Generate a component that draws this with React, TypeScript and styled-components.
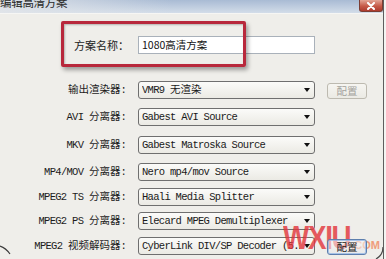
import React from "react";
import styled, { createGlobalStyle } from "styled-components";

const Global = createGlobalStyle`
  html, body { margin: 0; padding: 0; background: #f4f4f2; }
  body { width: 386px; height: 259px; overflow: hidden; }
  #root { width: 386px; height: 259px; }
`;

const Frame = styled.div`
  position: relative;
  width: 383px;
  height: 259px;
  border-right: 1px solid #5e5e5e;
  background: #efeeea;
  display: flex;
  flex-direction: column;
  overflow: hidden;
`;

const TitleBar = styled.div`
  height: 13px;
  flex: none;
  display: flex;
  justify-content: space-between;
  align-items: flex-start;
  background:
    linear-gradient(to right, rgba(226, 229, 233, 0.9), rgba(226, 229, 233, 0) 45%),
    linear-gradient(to bottom, #a9bbd4, #d3dde9);
  border-bottom: 1px solid #f6f6f4;
`;

const Title = styled.span`
  font-family: "Noto Sans CJK SC", sans-serif;
  font-size: 11.5px;
  line-height: 12px;
  margin-top: -4px;
  color: #2a2a2a;
  letter-spacing: -0.3px;
`;

const CloseButton = styled.div`
  width: 24px;
  height: 12px;
  box-sizing: border-box;
  border: 1px solid #7b3d33;
  border-top: none;
  border-radius: 0 0 3px 3px;
  background: linear-gradient(to bottom, #e3a595, #c65a48 55%, #ad3a2e);
  display: flex;
  align-items: center;
  justify-content: center;
`;

const Body = styled.div`
  flex: 1;
  padding-top: 22px;
  display: flex;
  flex-direction: column;
`;

const Row = styled.div<{ $gap: number }>`
  display: grid;
  grid-template-columns: 126px 177px 40px;
  column-gap: 12px;
  height: 18px;
  margin-top: ${(p) => p.$gap}px;
  align-items: center;
`;

const Label = styled.span`
  justify-self: end;
  font-family: "Liberation Mono", "Noto Sans CJK SC", monospace;
  font-size: 10.5px;
  letter-spacing: -0.7px;
  line-height: 18px;
  color: #1c1c1c;
  white-space: pre;
`;

const Han = styled.span`
  font-family: "Noto Sans CJK SC", sans-serif;
  font-size: 10.5px;
  letter-spacing: 0;
`;

const NameLabel = styled.span`
  justify-self: end;
  margin-right: -3px;
  font-family: "Noto Sans CJK SC", sans-serif;
  font-size: 11px;
  line-height: 18px;
  color: #222;
`;

const Input = styled.div`
  box-sizing: border-box;
  height: 18px;
  border: 1px solid #a9b1ba;
  background: #fff;
  padding-left: 3px;
  font-family: "Noto Sans CJK SC", sans-serif;
  font-size: 10.5px;
  line-height: 16px;
  color: #111;
`;

const Select = styled.div`
  box-sizing: border-box;
  height: 18px;
  border: 1px solid #6f6f6f;
  border-radius: 3px;
  background: linear-gradient(to bottom, #fbfbf9, #ebeae4);
  display: flex;
  align-items: center;
  padding: 0 4px 0 3px;
`;

const SelectText = styled.span`
  flex: 1;
  overflow: hidden;
  white-space: pre;
  font-family: "Liberation Mono", "Noto Sans CJK SC", monospace;
  font-size: 10.5px;
  letter-spacing: -0.7px;
  line-height: 16px;
  color: #1a1a1a;
`;

const Arrow = styled.span`
  flex: none;
  width: 0;
  height: 0;
  margin-left: 4px;
  border-left: 3.5px solid transparent;
  border-right: 3.5px solid transparent;
  border-top: 4px solid #111;
`;

const ConfigButton = styled.div<{ $enabled?: boolean }>`
  position: relative;
  z-index: 2;
  box-sizing: border-box;
  height: 16px;
  align-self: end;
  border-radius: 3px;
  border: 1px solid ${(p) => (p.$enabled ? "#5d7fae" : "#bdbab0")};
  background: ${(p) =>
    p.$enabled
      ? "linear-gradient(to bottom, rgba(251,251,250,0.55), rgba(226,228,232,0.55))"
      : "linear-gradient(to bottom, #f6f5f1, #ebeae4)"};
  box-shadow: ${(p) => (p.$enabled ? "inset 0 0 0 1px rgba(150,185,230,0.8)" : "none")};
  display: flex;
  align-items: center;
  justify-content: center;
  font-family: "Noto Sans CJK SC", sans-serif;
  font-size: 10.5px;
  line-height: 14px;
  color: ${(p) => (p.$enabled ? "#1a1a1a" : "#a3a29c")};
`;

const Highlight = styled.div`
  position: absolute;
  left: 61px;
  top: 21px;
  width: 185px;
  height: 46px;
  box-sizing: border-box;
  border: 3px solid #b8283c;
  border-radius: 2px;
  box-shadow: 2px 3px 4px rgba(0, 0, 0, 0.35), inset 1px 1px 2px rgba(0, 0, 0, 0.25);
  pointer-events: none;
`;

const Watermark = styled.div`
  position: absolute;
  z-index: 1;
  left: 283px;
  top: 219px;
  display: flex;
  align-items: baseline;
  pointer-events: none;
  opacity: 0.8;
`;

const WmBig = styled.span`
  display: inline-block;
  font-family: "Liberation Sans", sans-serif;
  font-weight: bold;
  font-size: 33px;
  letter-spacing: -1.5px;
  color: #e2353b;
  transform: scaleX(0.84);
  transform-origin: left center;
  margin-right: -12px;
`;

const WmSmall = styled.span`
  font-family: "Liberation Sans", sans-serif;
  font-weight: bold;
  font-size: 11px;
  color: #f0895f;
`;

const Corner = styled.svg<{ $side: "left" | "right" }>`
  position: absolute;
  bottom: 0;
  ${(p) => (p.$side === "left" ? "left: 0;" : "right: -1px;")}
  pointer-events: none;
`;

const mixed = (s: string) =>
  s.split(/([\u3000-\u9fff\uff00-\uffef]+)/).map((part, i) =>
    /[\u3000-\u9fff\uff00-\uffef]/.test(part) ? <Han key={i}>{part}</Han> : part
  );

type RowData = { label: string; value: string; gap: number; button?: "off" | "on" };

const rows: RowData[] = [
  { label: "输出渲染器:", value: "VMR9 无渲染", gap: 26, button: "off" },
  { label: "AVI 分离器:", value: "Gabest AVI Source", gap: 9 },
  { label: "MKV 分离器:", value: "Gabest Matroska Source", gap: 10 },
  { label: "MP4/MOV 分离器:", value: "Nero mp4/mov Source", gap: 9 },
  { label: "MPEG2 TS 分离器:", value: "Haali Media Splitter", gap: 7 },
  { label: "MPEG2 PS 分离器:", value: "Elecard MPEG Demultiplexer", gap: 6 },
  { label: "MPEG2 视频解码器:", value: "CyberLink DIV/SP Decoder (5.2)", gap: 7, button: "on" },
];

export default function App() {
  return (
    <>
      <Global />
      <Frame>
        <TitleBar>
          <Title>编辑高清方案</Title>
          <CloseButton>
            <svg width="10" height="8" viewBox="0 0 10 8">
              <path d="M2 1 L8 7 M8 1 L2 7" stroke="#fff" strokeWidth="2" strokeLinecap="round" />
            </svg>
          </CloseButton>
        </TitleBar>
        <Body>
          <Row $gap={0}>
            <NameLabel>方案名称：</NameLabel>
            <Input>1080高清方案</Input>
          </Row>
          {rows.map((r) => (
            <Row key={r.label} $gap={r.gap}>
              <Label>{mixed(r.label)}</Label>
              <Select>
                <SelectText>{mixed(r.value)}</SelectText>
                <Arrow />
              </Select>
              {r.button && <ConfigButton $enabled={r.button === "on"}>配置</ConfigButton>}
            </Row>
          ))}
        </Body>
        <Highlight />
        <Watermark>
          <WmBig>WXIU</WmBig>
          <WmSmall>.COM</WmSmall>
        </Watermark>
        <Corner $side="left" width="12" height="14" viewBox="0 0 12 14">
          <path d="M0 1 Q6 3 10 9" stroke="#3a3a3a" strokeWidth="1.2" fill="none" />
        </Corner>
        <Corner $side="right" width="10" height="12" viewBox="0 0 10 12">
          <path d="M9 0 Q9 8 2 12" stroke="#4a4a4a" strokeWidth="1.2" fill="none" />
        </Corner>
      </Frame>
    </>
  );
}
